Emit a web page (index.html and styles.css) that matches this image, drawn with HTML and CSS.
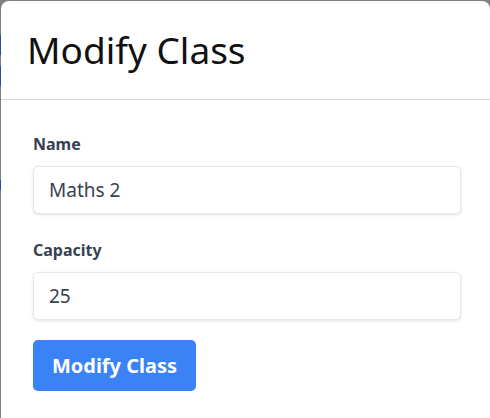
FILE: index.html
```html
<!DOCTYPE html>
<html lang="en">
<head>
<meta charset="utf-8">
<title>Modify Class</title>
<link rel="stylesheet" href="styles.css">
</head>
<body>
<div class="backdrop">
  <div class="strip">
    <span class="seg seg-a"></span>
    <span class="seg seg-b"></span>
    <span class="seg seg-c"></span>
  </div>
  <div class="modal">
    <header class="modal-header">
      <h1 class="modal-title">Modify Class</h1>
    </header>
    <form class="modal-body">
      <div class="field">
        <label class="label" for="name">Name</label>
        <input class="input" id="name" type="text" value="Maths 2">
      </div>
      <div class="field">
        <label class="label" for="cap">Capacity</label>
        <input class="input" id="cap" type="text" value="25">
      </div>
      <button class="btn" type="button">Modify Class</button>
    </form>
  </div>
</div>
</body>
</html>
```

FILE: styles.css
```css
html, body {
  margin: 0;
  padding: 0;
  background: #808080;
  font-family: "Noto Sans", "Open Sans", sans-serif;
}
.backdrop {
  display: flex;
  height: 418px;
  overflow: hidden;
  padding-top: 1px;
  box-sizing: border-box;
}
.strip {
  width: 1px;
  flex: 0 0 1px;
  display: flex;
  flex-direction: column;
  margin-top: -1px;
}
.seg {
  display: block;
  width: 1px;
  background: #1f4e9e;
}
.seg-a { margin-top: 35px; height: 20px; }
.seg-b { margin-top: 11px; height: 20px; }
.seg-c { margin-top: 94px; height: 10px; }
.modal {
  flex: 1;
  background: #fff;
  border-radius: 8px 8px 0 0;
  min-height: 430px;
}
.modal-header {
  padding: 24px 24px 24px 26px;
  border-bottom: 1px solid #d4d4d8;
}
.modal-title {
  margin: 0;
  font-size: 37px;
  line-height: 50px;
  font-weight: 400;
  color: #111;
}
.modal-body {
  padding: 32px 29px 0 32px;
  display: flex;
  flex-direction: column;
}
.field {
  display: flex;
  flex-direction: column;
  margin-bottom: 24px;
}
.field + .field { margin-bottom: 20px; }
.label {
  font-size: 16px;
  font-weight: 700;
  line-height: 24px;
  color: #374151;
  margin-bottom: 10px;
}
.input {
  height: 48px;
  box-sizing: border-box;
  border: 1px solid #e5e7eb;
  border-radius: 5px;
  box-shadow: 0 1px 3px rgba(0,0,0,0.12);
  padding: 0 15px;
  font-family: inherit;
  font-size: 19px;
  color: #374151;
  background: #fff;
  outline: none;
}
.btn {
  align-self: flex-start;
  width: 163px;
  height: 51px;
  border: 0;
  border-radius: 5px;
  background: #3b82f6;
  color: #fff;
  font-family: inherit;
  font-size: 20px;
  font-weight: 700;
  padding: 0;
}
```
